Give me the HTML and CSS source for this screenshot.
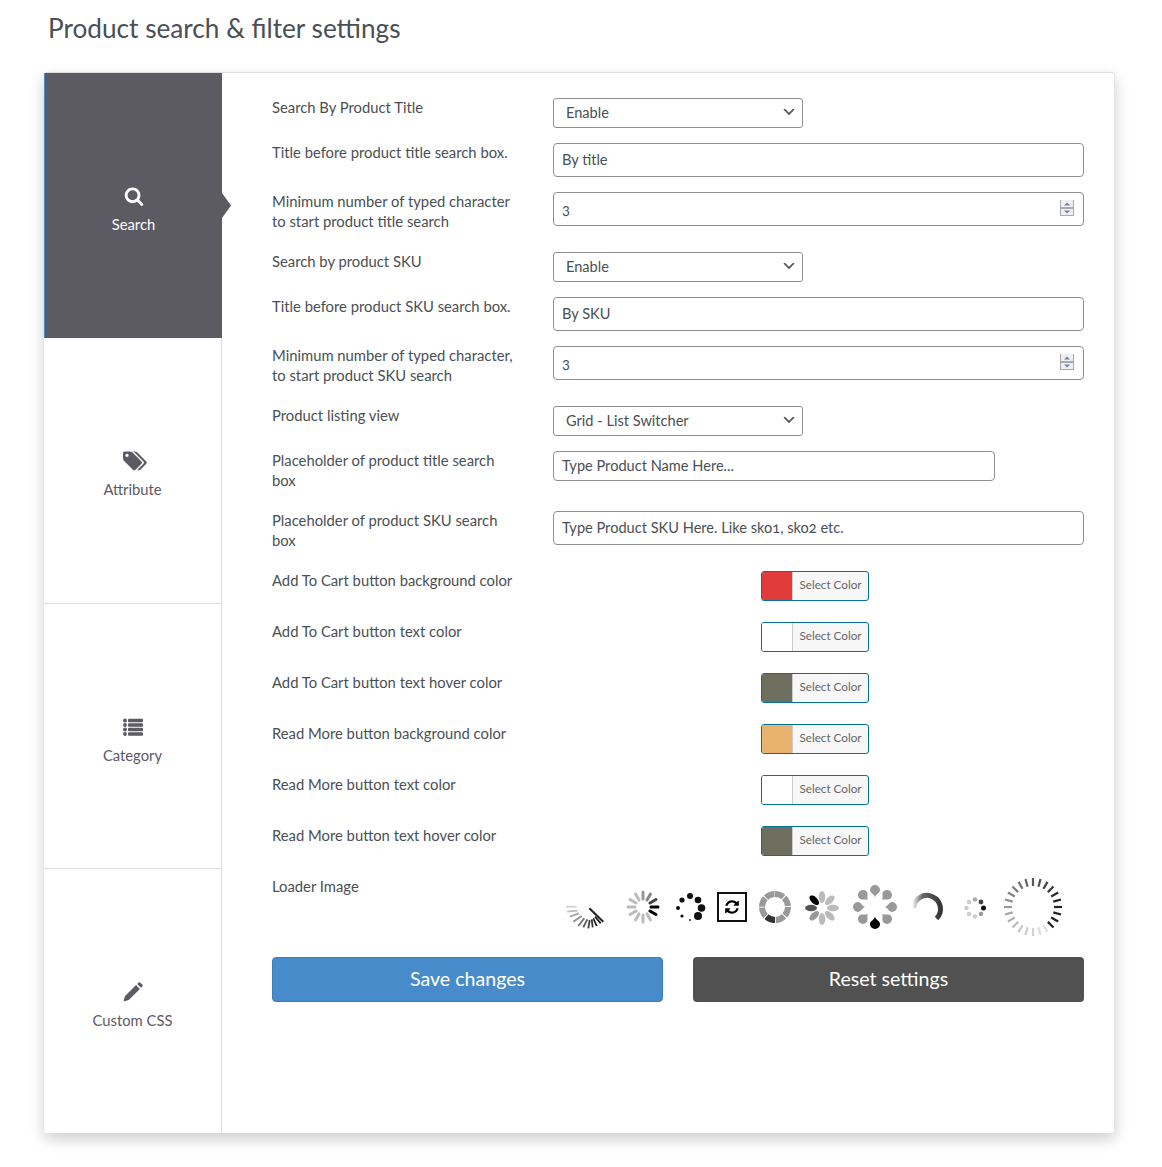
FILE: index.html
```html
<!DOCTYPE html>
<html lang="en">

<head>
    <meta charset="UTF-8">
    <title>Product search &amp; filter settings</title>
    <link rel="stylesheet" href="styles.css">
</head>

<body>
    <h1 class="page-title">Product search &amp; filter settings</h1>

    <div class="card">
        <nav class="tabs">
            <a class="tab active" href="#">
                <svg class="tab-icon" viewBox="0 0 1792 1792"><path d="M1216 832q0-185-131.500-316.500t-316.500-131.500-316.500 131.500-131.500 316.500 131.500 316.500 316.500 131.500 316.500-131.500 131.500-316.500zm512 832q0 52-38 90t-90 38q-54 0-90-38l-343-342q-179 124-399 124-143 0-273.500-55.500t-225-150-150-225-55.500-273.500 55.500-273.500 150-225 225-150 273.500-55.500 273.500 55.500 225 150 150 225 55.500 273.500q0 220-124 399l343 343q37 37 37 90z"/></svg>
                <span>Search</span>
            </a>
            <a class="tab" href="#">
                <svg class="tab-icon wide" viewBox="0 128 1920 1536"><path d="M448 448q0-53-37.500-90.500t-90.500-37.500-90.500 37.500-37.500 90.500 37.500 90.500 90.500 37.500 90.500-37.500 37.500-90.500zm1067 576q0 53-37 90l-491 492q-39 37-91 37-53 0-90-37l-715-716q-38-37-64.500-101t-26.500-117v-416q0-52 38-90t90-38h416q53 0 117 26.500t102 64.500l715 714q37 39 37 91zm384 0q0 53-37 90l-491 492q-39 37-91 37-36 0-59-14t-53-45l470-470q37-37 37-90 0-52-37-91l-715-714q-38-38-102-64.500t-117-26.500h224q53 0 117 26.500t102 64.500l715 714q37 39 37 91z"/></svg>
                <span>Attribute</span>
            </a>
            <a class="tab" href="#">
                <svg class="tab-icon" viewBox="0 0 20 20"><circle cx="2" cy="3.500" r="1.900"/><circle cx="2" cy="8" r="1.900"/><circle cx="2" cy="12.500" r="1.900"/><circle cx="2" cy="17" r="1.900"/><rect x="5" y="1.700" width="15" height="3.600" rx="1"/><rect x="5" y="6.200" width="15" height="3.600" rx="1"/><rect x="5" y="10.700" width="15" height="3.600" rx="1"/><rect x="5" y="15.200" width="15" height="3.600" rx="1"/></svg>
                <span>Category</span>
            </a>
            <a class="tab" href="#">
                <svg class="tab-icon" viewBox="0 0 20 20"><path d="M0.500 19.500l1.400-5.300L13 3.100l3.900 3.900L5.800 18.100zM14.200 1.900l1.200-1.200q1-.9 2 0l1.900 1.900q.9 1 0 2l-1.200 1.200z"/></svg>
                <span>Custom CSS</span>
            </a>
        </nav>

        <form class="settings">
            <div class="row">
                <label>Search By Product Title</label>
                <select class="select"><option>Enable</option></select>
            </div>
            <div class="row">
                <label>Title before product title search box.</label>
                <input class="text" type="text" value="By title">
            </div>
            <div class="row">
                <label>Minimum number of typed character<br>to start product title search</label>
                <input class="text" type="number" value="3">
            </div>
            <div class="row">
                <label>Search by product SKU</label>
                <select class="select"><option>Enable</option></select>
            </div>
            <div class="row">
                <label>Title before product SKU search box.</label>
                <input class="text" type="text" value="By SKU">
            </div>
            <div class="row">
                <label>Minimum number of typed character,<br>to start product SKU search</label>
                <input class="text" type="number" value="3">
            </div>
            <div class="row">
                <label>Product listing view</label>
                <select class="select"><option>Grid - List Switcher</option></select>
            </div>
            <div class="row">
                <label>Placeholder of product title search<br>box</label>
                <input class="text short" type="text" value="Type Product Name Here...">
            </div>
            <div class="row">
                <label>Placeholder of product SKU search<br>box</label>
                <input class="text" type="text" value="Type Product SKU Here. Like sko1, sko2 etc.">
            </div>

            <div class="row color-row">
                <label>Add To Cart button background color</label>
                <button type="button" class="color-btn"><i class="swatch red"></i><span>Select Color</span></button>
            </div>
            <div class="row color-row">
                <label>Add To Cart button text color</label>
                <button type="button" class="color-btn"><i class="swatch white"></i><span>Select Color</span></button>
            </div>
            <div class="row color-row">
                <label>Add To Cart button text hover color</label>
                <button type="button" class="color-btn"><i class="swatch olive"></i><span>Select Color</span></button>
            </div>
            <div class="row color-row">
                <label>Read More button background color</label>
                <button type="button" class="color-btn"><i class="swatch tan"></i><span>Select Color</span></button>
            </div>
            <div class="row color-row">
                <label>Read More button text color</label>
                <button type="button" class="color-btn"><i class="swatch white"></i><span>Select Color</span></button>
            </div>
            <div class="row color-row">
                <label>Read More button text hover color</label>
                <button type="button" class="color-btn"><i class="swatch olive"></i><span>Select Color</span></button>
            </div>

            <div class="row">
                <label>Loader Image</label>
                <div class="loaders">
                    <svg width="65" height="60" viewBox="0 0 65 60" stroke="#222" stroke-width="1.800">
                        <line x1="13" y1="29.700" x2="23.700" y2="29.700" opacity=".2"/>
                        <line x1="14.300" y1="34.700" x2="24.300" y2="33.700" opacity=".3"/>
                        <line x1="17" y1="39.700" x2="26" y2="36.300" opacity=".4"/>
                        <line x1="20.300" y1="44.700" x2="28.700" y2="39" opacity=".5"/>
                        <line x1="25.300" y1="49" x2="31.300" y2="41.300" opacity=".65"/>
                        <line x1="30.300" y1="50.300" x2="34.300" y2="42.300" opacity=".75"/>
                        <line x1="35.300" y1="51.300" x2="36.700" y2="43" opacity=".85"/>
                        <line x1="39.700" y1="50.300" x2="38.700" y2="42.300" opacity=".9"/>
                        <line x1="43.700" y1="49" x2="40.300" y2="41.300"/>
                        <line x1="47.700" y1="46.300" x2="42" y2="39.700"/>
                        <line x1="36.300" y1="31.300" x2="50.300" y2="44.700" stroke-width="2"/>
                    </svg>
                    <svg width="50" height="60" viewBox="-25 -30 50 60" stroke-width="3" stroke-linecap="round">
                        <line x1="8" x2="15" transform="rotate(-60)" stroke="#888"/>
                        <line x1="8" x2="15" transform="rotate(-30)" stroke="#444"/>
                        <line x1="8" x2="15" transform="rotate(0)" stroke="#000"/>
                        <line x1="8" x2="15" transform="rotate(30)" stroke="#000"/>
                        <line x1="8" x2="15" transform="rotate(60)" stroke="#bbb"/>
                        <line x1="8" x2="15" transform="rotate(90)" stroke="#bbb"/>
                        <line x1="8" x2="15" transform="rotate(120)" stroke="#bbb"/>
                        <line x1="8" x2="15" transform="rotate(150)" stroke="#bbb"/>
                        <line x1="8" x2="15" transform="rotate(180)" stroke="#bbb"/>
                        <line x1="8" x2="15" transform="rotate(210)" stroke="#bbb"/>
                        <line x1="8" x2="15" transform="rotate(240)" stroke="#bbb"/>
                        <line x1="8" x2="15" transform="rotate(270)" stroke="#999"/>
                    </svg>
                    <svg width="44" height="60" viewBox="-22 -31 44 60" fill="#111">
                        <circle cx="0" cy="-12" r="3"/>
                        <circle cx="8" cy="-8" r="3.300"/>
                        <circle cx="11.500" cy="0" r="3.800"/>
                        <circle cx="8" cy="8" r="4"/>
                        <circle cx="0" cy="12" r=".9"/>
                        <circle cx="-8" cy="8" r="1.600"/>
                        <circle cx="-12" cy="0" r="2"/>
                        <circle cx="-8" cy="-8" r="2.600"/>
                    </svg>
                    <div class="loader-box">
                        <svg width="16" height="16" viewBox="0 0 1792 1792"><path d="M1639 1056q0 5-1 7-64 268-268 434.500t-478 166.500q-146 0-282.500-55t-243.500-157l-129 129q-19 19-45 19t-45-19-19-45v-448q0-26 19-45t45-19h448q26 0 45 19t19 45-19 45l-137 137q71 66 161 102t187 36q134 0 250-65t186-179q11-17 53-117 8-23 30-23h192q13 0 22.500 9.500t9.500 22.500zm25-800v448q0 26-19 45t-45 19h-448q-26 0-45-19t-19-45 19-45l138-138q-148-137-349-137-134 0-250 65t-186 179q-11 17-53 117-8 23-30 23h-199q-13 0-22.500-9.500t-9.500-22.500v-7q65-268 270-434.500t480-166.500q146 0 284 55.500t245 156.500l130-129q19-19 45-19t45 19 19 45z"/></svg>
                    </div>
                    <svg width="46" height="60" viewBox="-23 -30 46 60" fill="none" stroke-width="6">
                        <circle r="13" stroke="#999" stroke-dasharray="9.210 1" transform="rotate(-90.500)"/>
                        <circle r="13" stroke="#333" stroke-dasharray="9.210 72.470" transform="rotate(90)"/>
                    </svg>
                    <svg width="48" height="60" viewBox="-24 -31 48 60">
                        <ellipse cy="-11" rx="3.200" ry="6" fill="#bbb"/>
                        <ellipse cy="-11" rx="3.200" ry="6" fill="#bbb" transform="rotate(45)"/>
                        <ellipse cy="-11" rx="3.200" ry="6" fill="#bbb" transform="rotate(90)"/>
                        <ellipse cy="-11" rx="3.200" ry="6" fill="#bbb" transform="rotate(135)"/>
                        <ellipse cy="-11" rx="3.200" ry="6" fill="#bbb" transform="rotate(180)"/>
                        <ellipse cy="-11" rx="3.200" ry="6" fill="#999" transform="rotate(225)"/>
                        <ellipse cy="-11" rx="3.200" ry="6" fill="#555" transform="rotate(270)"/>
                        <ellipse cy="-11" rx="3.200" ry="6" fill="#000" transform="rotate(315)"/>
                    </svg>
                    <svg width="58" height="60" viewBox="-29 -30 58 60" fill="#999">
                        <path d="M0-10C-1-13-5-14-5-17a5 5 0 0 1 10 0C5-14 1-13 0-10z"/>
                        <path d="M0-10C-1-13-5-14-5-17a5 5 0 0 1 10 0C5-14 1-13 0-10z" transform="rotate(45)"/>
                        <path d="M0-10C-1-13-5-14-5-17a5 5 0 0 1 10 0C5-14 1-13 0-10z" transform="rotate(90)"/>
                        <path d="M0-10C-1-13-5-14-5-17a5 5 0 0 1 10 0C5-14 1-13 0-10z" transform="rotate(135)"/>
                        <path d="M0-10C-1-13-5-14-5-17a5 5 0 0 1 10 0C5-14 1-13 0-10z" transform="rotate(180)" fill="#000"/>
                        <path d="M0-10C-1-13-5-14-5-17a5 5 0 0 1 10 0C5-14 1-13 0-10z" transform="rotate(225)"/>
                        <path d="M0-10C-1-13-5-14-5-17a5 5 0 0 1 10 0C5-14 1-13 0-10z" transform="rotate(270)"/>
                        <path d="M0-10C-1-13-5-14-5-17a5 5 0 0 1 10 0C5-14 1-13 0-10z" transform="rotate(315)"/>
                    </svg>
                    <svg width="46" height="60" viewBox="-23 -32 46 60" fill="none">
                        <defs>
                            <linearGradient id="arcFade" gradientUnits="userSpaceOnUse" x1="-15" y1="0" x2="15" y2="0">
                                <stop offset="0" stop-color="#fff"/>
                                <stop offset=".35" stop-color="#666"/>
                                <stop offset="1" stop-color="#333"/>
                            </linearGradient>
                        </defs>
                        <path d="M-13.500-1A13.500 13.500 0 1 1 9.500 9.500" stroke="url(#arcFade)" stroke-width="5"/>
                    </svg>
                    <svg width="50" height="60" viewBox="-25 -31 50 60" fill="#ccc">
                        <circle cx="0" cy="-8.500" r="2.200" fill="#aaa"/>
                        <circle cx="6" cy="-6" r="2.400" fill="#444"/>
                        <circle cx="8.500" cy="0" r="2.500" fill="#111"/>
                        <circle cx="6" cy="6" r="2.200" fill="#999"/>
                        <circle cx="0" cy="8.500" r="2.200"/>
                        <circle cx="-6" cy="6" r="2.200"/>
                        <circle cx="-8.500" cy="0" r="2.200"/>
                        <circle cx="-6" cy="-6" r="2.200"/>
                    </svg>
                    <svg width="66" height="60" viewBox="-33 -30 66 60" stroke="#222" stroke-width="2.200">
                        <line x1="21" x2="29" transform="rotate(0)"/>
                        <line x1="21" x2="29" transform="rotate(15)"/>
                        <line x1="21" x2="29" transform="rotate(30)"/>
                        <line x1="21" x2="29" transform="rotate(45)"/>
                        <line x1="21" x2="29" transform="rotate(60)" opacity=".12"/>
                        <line x1="21" x2="29" transform="rotate(75)" opacity=".15"/>
                        <line x1="21" x2="29" transform="rotate(90)" opacity=".2"/>
                        <line x1="21" x2="29" transform="rotate(105)" opacity=".22"/>
                        <line x1="21" x2="29" transform="rotate(120)" opacity=".25"/>
                        <line x1="21" x2="29" transform="rotate(135)" opacity=".3"/>
                        <line x1="21" x2="29" transform="rotate(150)" opacity=".35"/>
                        <line x1="21" x2="29" transform="rotate(165)" opacity=".4"/>
                        <line x1="21" x2="29" transform="rotate(180)" opacity=".45"/>
                        <line x1="21" x2="29" transform="rotate(195)" opacity=".5"/>
                        <line x1="21" x2="29" transform="rotate(210)" opacity=".55"/>
                        <line x1="21" x2="29" transform="rotate(225)" opacity=".6"/>
                        <line x1="21" x2="29" transform="rotate(240)" opacity=".65"/>
                        <line x1="21" x2="29" transform="rotate(255)" opacity=".7"/>
                        <line x1="21" x2="29" transform="rotate(270)" opacity=".75"/>
                        <line x1="21" x2="29" transform="rotate(285)" opacity=".8"/>
                        <line x1="21" x2="29" transform="rotate(300)" opacity=".85"/>
                        <line x1="21" x2="29" transform="rotate(315)" opacity=".9"/>
                        <line x1="21" x2="29" transform="rotate(330)" opacity=".95"/>
                        <line x1="21" x2="29" transform="rotate(345)"/>
                    </svg>
                </div>
            </div>

            <div class="actions">
                <button type="button" class="btn save">Save changes</button>
                <button type="button" class="btn reset">Reset settings</button>
            </div>
        </form>
    </div>
</body>

</html>
```
FILE: styles.css
```css
body {
    font-family: Lato, "Open Sans", sans-serif;
    font-variant-numeric: oldstyle-nums;
    background-color: #fff;
    color: #4a4f55;
    margin: 0;
    padding: 0 47px 34px 44px;
}

.page-title {
    font-size: 26.2px;
    font-weight: 400;
    line-height: 32px;
    margin: 0;
    padding: 12px 0 28px 4px;
    color: #4a4f55;
}

.card {
    display: flex;
    height: 1060px;
    background-color: #fff;
    border-top: 1px solid #ddd;
    border-right: 1px solid #e5e5e5;
    box-shadow: 0 6px 15px rgba(0, 0, 0, 0.2);
    border-radius: 3px;
}

.tabs {
    display: flex;
    flex-direction: column;
    width: 178px;
    flex-shrink: 0;
    border-right: 1px solid #ddd;
    box-sizing: border-box;
}

.tab {
    position: relative;
    flex: 1;
    display: flex;
    flex-direction: column;
    align-items: center;
    justify-content: center;
    gap: 8px;
    padding-top: 10px;
    color: #5c5a63;
    font-size: 14.8px;
    line-height: 20px;
    text-decoration: none;
    border-bottom: 1px solid #ddd;
}

.tab:last-child {
    border-bottom: none;
}

.tab-icon {
    width: 20px;
    height: 20px;
    fill: #5c5a63;
}

.tab-icon.wide {
    width: 24px;
    margin-left: 4px;
}

.tab.active {
    background-color: #5c5a63;
    color: #fff;
    border-left: 1px solid #4589c9;
    border-bottom-color: #5c5a63;
    margin-right: -1px;
}

.tab.active .tab-icon {
    fill: #fff;
}

.tab.active::after {
    content: "";
    position: absolute;
    left: 100%;
    top: 120px;
    width: 9px;
    height: 25px;
    background-color: #5c5a63;
    clip-path: polygon(0 0, 100% 50%, 0 100%);
}

.settings {
    flex: 1;
    padding: 25px 30px 0 50px;
}

.row {
    display: grid;
    grid-template-columns: 281px 531px;
    align-items: start;
    margin-bottom: 15px;
}

.row label {
    font-size: 14.8px;
    line-height: 20px;
    margin-top: -1px;
    padding-bottom: 6px;
}

.select {
    width: 250px;
    height: 30px;
    padding: 0 24px 2px 12px;
    font: inherit;
    font-size: 14.6px;
    color: #4a4f55;
    background: #fff url("data:image/svg+xml,%3Csvg xmlns='http://www.w3.org/2000/svg' width='20' height='20'%3E%3Cpath d='M5 6l5 5 5-5 2 1-7 7-7-7z' fill='%23555'/%3E%3C/svg%3E") no-repeat right 5px top 5px;
    background-size: 16px 16px;
    border: 1px solid #8c8f94;
    border-radius: 3px;
    appearance: none;
}

.text {
    width: 100%;
    height: 34px;
    box-sizing: border-box;
    padding: 0 8px 2px;
    font: inherit;
    font-size: 14.6px;
    color: #4a4f55;
    background-color: #fff;
    border: 1px solid #8c8f94;
    border-radius: 4px;
}

.text::-webkit-inner-spin-button {
    appearance: none;
    width: 14px;
    height: 16px;
    margin: 0 1px 0 0;
    background: url("data:image/svg+xml,%3Csvg xmlns='http://www.w3.org/2000/svg' width='14' height='16'%3E%3Crect x='.5' y='-1' width='13' height='8.500' fill='%23efefef' stroke='%23aaa'/%3E%3Crect x='.5' y='8.500' width='13' height='7' fill='%23efefef' stroke='%23aaa'/%3E%3Cpath d='M4 5.500l3-3 3 3z' fill='%236a7fc0'/%3E%3Cpath d='M4 10.500l3 3 3-3z' fill='%236a7fc0'/%3E%3C/svg%3E") no-repeat;
    opacity: 1;
}

.text.short {
    width: 442px;
    height: 30px;
}

.color-row {
    margin-bottom: 21px;
}

.color-row label {
    padding-bottom: 0;
}

.color-btn {
    display: flex;
    align-items: stretch;
    width: 108px;
    height: 30px;
    margin-left: 208px;
    padding: 0;
    background-color: #f7f7f7;
    border: 1px solid #0071a1;
    border-radius: 3px;
    overflow: hidden;
}

.swatch {
    display: block;
    width: 30px;
    border-right: 1px solid #ccc;
}

.swatch.red { background-color: #e03a3a; }
.swatch.white { background-color: #fff; }
.swatch.olive { background-color: #6e6e5e; }
.swatch.tan { background-color: #e8b36e; }

.color-btn span {
    flex: 1;
    font-family: Lato, sans-serif;
    font-size: 11.7px;
    line-height: 25px;
    color: #666;
    text-align: center;
}

.loaders {
    display: flex;
    align-items: center;
    height: 65px;
    padding-bottom: 5px;
    box-sizing: border-box;
}

.loader-box {
    display: flex;
    align-items: center;
    justify-content: center;
    width: 30px;
    height: 30px;
    margin: 0 5px;
    box-sizing: border-box;
    border: 2px solid #111;
}

.actions {
    display: flex;
    gap: 30px;
    width: 812px;
}

.btn {
    flex: 1;
    height: 45px;
    padding: 0 0 2px;
    font: inherit;
    font-size: 19.6px;
    color: #fff;
    border: 1px solid transparent;
    border-radius: 4px;
}

.btn.save {
    background-color: #478bca;
    border-color: #3a7dbc;
}

.btn.reset {
    background-color: #515151;
}
```
